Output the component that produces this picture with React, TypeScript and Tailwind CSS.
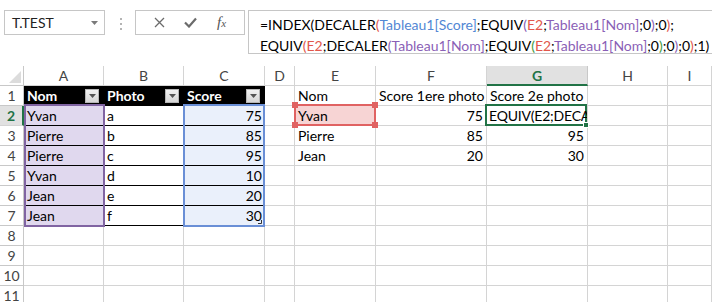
import React from 'react';

type Seg = [string, string];

const K = 'text-black';
const R = 'text-[#e2574c]';
const B = 'text-[#5287d4]';
const P = 'text-[#8a5fb6]';
const G = 'text-[#3e9a3e]';

const line1: Seg[] = [
  ['=INDEX(DECALER', K], ['(', R], ['Tableau1[Score]', B], [';EQUIV', K], ['(', P], ['E2', R], [';', K],
  ['Tableau1[Nom]', P], [';0', K], [')', P], [';0', K], [')', R], [';', K],
];

const line2: Seg[] = [
  ['EQUIV', K], ['(', R], ['E2', R], [';DECALER', K], ['(', P], ['Tableau1[Nom]', P], [';EQUIV', K], ['(', G],
  ['E2', R], [';', K], ['Tableau1[Nom]', P], [';0', K], [')', G], [';0', K], [')', P], [';0', K], [')', R], [';1)', K],
];

const letters = ['A', 'B', 'C', 'D', 'E', 'F', 'G', 'H', 'I'];

const rows: string[][] = [
  ['Nom', 'Photo', 'Score', '', 'Nom', 'Score 1ere photo', 'Score 2e photo', '', ''],
  ['Yvan', 'a', '75', '', 'Yvan', '75', 'EQUIV(E2;DECA', '', ''],
  ['Pierre', 'b', '85', '', 'Pierre', '85', '95', '', ''],
  ['Pierre', 'c', '95', '', 'Jean', '20', '30', '', ''],
  ['Yvan', 'd', '10', '', '', '', '', '', ''],
  ['Jean', 'e', '20', '', '', '', '', '', ''],
  ['Jean', 'f', '30', '', '', '', '', '', ''],
  ['', '', '', '', '', '', '', '', ''],
  ['', '', '', '', '', '', '', '', ''],
  ['', '', '', '', '', '', '', '', ''],
  ['', '', '', '', '', '', '', '', ''],
];

function Dropdown() {
  return (
    <span className="w-[14px] h-[14px] mr-[2px] shrink-0 bg-gradient-to-b from-[#f2f2f2] to-[#d6d6d6] border border-[#b5b5b5] flex items-center justify-center">
      <svg width="7" height="4" viewBox="0 0 7 4">
        <polygon points="0,0 7,0 3.5,4" fill="#555" />
      </svg>
    </span>
  );
}

function cellClass(r: number, c: number) {
  if (r === 1 && c <= 3) return 'bg-black text-white font-bold border-b border-black';
  if (r <= 7 && c === 1) return 'bg-[#e0d8ee] border-b border-black';
  if (r <= 7 && c === 2) return 'bg-white border-b border-black';
  if (r <= 7 && c === 3) return 'bg-[#eaf0fb] border-b border-black';
  if (r === 2 && c === 5) return 'bg-[#f7d4d4] border-r border-b border-[#d4d4d4]';
  return 'border-r border-b border-[#d4d4d4]';
}

function Cell({ r, c, value }: { r: number; c: number; value: string }) {
  const numeric = /^\d+$/.test(value);
  const editing = r === 2 && c === 7;
  return (
    <div className={`relative flex items-center overflow-hidden whitespace-nowrap ${editing ? 'pl-[2px]' : 'px-[3px]'} ${numeric ? 'justify-end' : 'justify-between'} ${cellClass(r, c)}`}>
      <span className={editing ? 'relative z-20 tracking-[-0.2px]' : ''}>{value}</span>
      {r === 1 && c <= 3 && <Dropdown />}
    </div>
  );
}

export default function App() {
  return (
    <div className="w-[712px] h-[302px] overflow-hidden bg-white font-[Lato,sans-serif] text-[14px] text-black">
      {/* formula bar */}
      <div className="h-[66px] flex items-start pt-[10px] pl-[4px]">
        <div className="w-[101px] h-[25px] border border-[#c6c6c6] flex items-center justify-between pl-[7px] pr-[6px] text-[#222] text-[14px]">
          <span>T.TEST</span>
          <svg width="7" height="4" viewBox="0 0 7 4">
            <polygon points="0,0 7,0 3.5,4" fill="#7a7a7a" />
          </svg>
        </div>
        <div className="ml-[15px] mt-[8px] flex flex-col gap-[3px]">
          <span className="w-[2px] h-[2px] bg-[#b4b4b4]" />
          <span className="w-[2px] h-[2px] bg-[#b4b4b4]" />
          <span className="w-[2px] h-[2px] bg-[#b4b4b4]" />
        </div>
        <div className="ml-[13px] w-[110px] h-[25px] border border-[#c6c6c6] flex items-center justify-around px-[8px]">
          <svg width="11" height="11" viewBox="0 0 11 11">
            <path d="M1 1 L10 10 M10 1 L1 10" stroke="#6b6b6b" strokeWidth="1.3" />
          </svg>
          <svg width="13" height="11" viewBox="0 0 13 11">
            <path d="M1 5.5 L5 9.5 L12 1.5" stroke="#6b6b6b" strokeWidth="2.2" fill="none" />
          </svg>
          <span className="font-['Liberation_Serif',serif] italic text-[#555] text-[15px] leading-none">
            f<span className="text-[11px]">x</span>
          </span>
        </div>
        <div className="ml-[3px] flex-1 h-[44px] border-l border-t border-b border-[#c6c6c6] pl-[11px] pt-[3px] leading-[21px] whitespace-nowrap">
          <div>{line1.map(([t, cls], i) => <span key={i} className={cls}>{t}</span>)}</div>
          <div>{line2.map(([t, cls], i) => <span key={i} className={cls}>{t}</span>)}</div>
        </div>
      </div>

      {/* sheet */}
      <div className="grid grid-cols-[24px_80px_80px_81px_30px_81px_111px_101px_80px_1fr] auto-rows-[20px]">
        <div className="border-r border-b border-[#c8c8c8] flex items-end justify-end pr-[2px] pb-[2px]">
          <svg width="12" height="12" viewBox="0 0 12 12">
            <polygon points="12,0 12,12 0,12" fill="#dcdcdc" />
          </svg>
        </div>
        {letters.map((l) => (
          <div
            key={l}
            className={
              l === 'G'
                ? 'bg-[#e1e1e1] text-[#217346] font-bold border-r border-[#c8c8c8] border-b-2 border-b-[#217346] flex items-center justify-center'
                : 'text-[#444] border-r border-b border-[#d4d4d4] flex items-center justify-center'
            }
          >
            {l}
          </div>
        ))}
        {rows.map((row, ri) => {
          const r = ri + 1;
          return (
            <React.Fragment key={r}>
              <div
                className={
                  r === 2
                    ? 'bg-[#e1e1e1] text-[#217346] font-bold border-b border-[#d4d4d4] border-r-2 border-r-[#217346] flex items-center justify-center'
                    : 'text-[#444] border-r border-b border-[#c8c8c8] flex items-center justify-center'
                }
              >
                {r}
              </div>
              {row.map((v, ci) => {
                const c = ci + 1;
                return (
                  <div key={c} className="relative">
                    <div className="h-full grid">
                      <Cell r={r} c={c} value={v} />
                    </div>
                    {r === 2 && c === 1 && (
                      <div className="absolute left-0 -top-[2px] w-[81px] h-[123px] border-2 border-[#8064a2] z-10 pointer-events-none" />
                    )}
                    {r === 2 && c === 3 && (
                      <div className="absolute -left-px -top-[2px] w-[82px] h-[123px] border-2 border-[#6a8fd6] z-10 pointer-events-none">
                        <svg className="absolute right-[1px] bottom-[1px]" width="4" height="4" viewBox="0 0 4 4">
                          <path d="M3.5 0 V3.5 H0" stroke="#333" strokeWidth="1" fill="none" />
                        </svg>
                      </div>
                    )}
                    {r === 2 && c === 5 && (
                      <div className="absolute -left-px -top-[2px] w-[82px] h-[22px] border-2 border-[#e06262] z-10 pointer-events-none">
                        <span className="absolute -left-[4px] -top-[4px] w-[6px] h-[6px] bg-[#e06262]" />
                        <span className="absolute -right-[4px] -top-[4px] w-[6px] h-[6px] bg-[#e06262]" />
                        <span className="absolute -left-[4px] -bottom-[4px] w-[6px] h-[6px] bg-[#e06262]" />
                        <span className="absolute -right-[4px] -bottom-[4px] w-[6px] h-[6px] bg-[#e06262]" />
                      </div>
                    )}
                    {r === 2 && c === 7 && (
                      <div className="absolute -left-[2px] -top-[2px] w-[102px] h-[22px] border-2 border-[#217346] z-10 pointer-events-none">
                        <span className="absolute -right-[4px] -bottom-[4px] w-[6px] h-[6px] bg-[#217346] border border-white" />
                      </div>
                    )}
                  </div>
                );
              })}
            </React.Fragment>
          );
        })}
      </div>
    </div>
  );
}
